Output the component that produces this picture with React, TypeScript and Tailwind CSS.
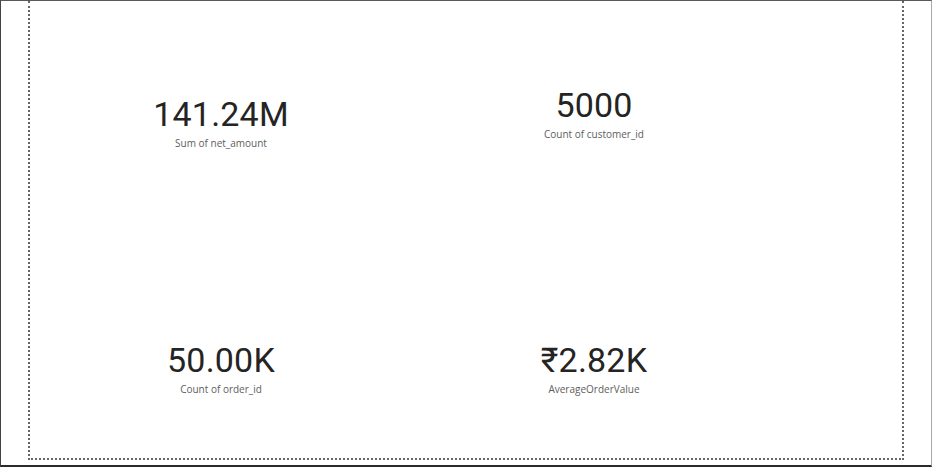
import React from 'react'

interface KpiCardProps {
  value: string
  label: string
  offset: string
}

function KpiCard({ value, label, offset }: KpiCardProps) {
  return (
    <div className={`flex flex-col items-center ${offset}`}>
      <div className="font-['Roboto',sans-serif] text-[34px] leading-none tracking-[0.2px] text-[#252423]">{value}</div>
      <div className="mt-[7px] font-['Open_Sans',sans-serif] text-[10px] leading-none text-[#605e5c]">
        {label}
      </div>
    </div>
  )
}

export default function App() {
  return (
    <div className="relative box-border h-[467px] w-[932px] overflow-hidden border-t border-l border-r border-b-2 border-t-[#595959] border-l-[#444444] border-r-[#a8a8a8] border-b-[#2b2b2b] bg-white">
      <div className="ml-[27px] h-[459px] w-[876px] border-2 border-t-0 border-dotted border-[#666666]">
        <div className="grid grid-cols-[382px_364px] grid-rows-[245px_auto]">
          <KpiCard value="141.24M" label="Sum of net_amount" offset="pt-[96px]" />
          <KpiCard value="5000" label="Count of customer_id" offset="pt-[87px]" />
          <KpiCard value="50.00K" label="Count of order_id" offset="pt-[97px]" />
          <KpiCard value="₹2.82K" label="AverageOrderValue" offset="pt-[97px]" />
        </div>
      </div>
      <div className="absolute bottom-[-2px] left-[586px] h-[2px] w-[39px] bg-[#35b59b]" />
    </div>
  )
}
